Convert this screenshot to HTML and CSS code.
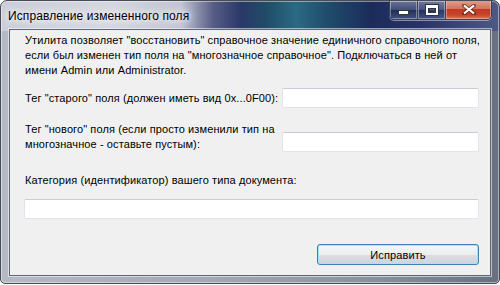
FILE: index.html
```html
<!DOCTYPE html>
<html lang="ru">
<head>
    <meta charset="utf-8">
    <title>Исправление измененного поля</title>
    <link rel="stylesheet" href="styles.css">
</head>
<body>
    <div class="window">
        <div class="titlebar">
            <span class="title">Исправление измененного поля</span>
            <div class="captions">
                <span class="cap cap-min"><span class="min-glyph"></span></span>
                <span class="cap cap-max"><span class="max-glyph"></span></span>
                <span class="cap cap-close">
                    <svg width="14" height="11" viewBox="0 0 14 11">
                        <path d="M2 1.5 L12 9.5 M12 1.5 L2 9.5" stroke="#3a1410" stroke-width="4" stroke-linecap="square" opacity="0.55"/>
                        <path d="M2 1.5 L12 9.5 M12 1.5 L2 9.5" stroke="#ffffff" stroke-width="2.2"/>
                    </svg>
                </span>
            </div>
        </div>
        <div class="client">
            <p class="intro">Утилита позволяет "восстановить" справочное значение единичного справочного поля,<br>если был изменен тип поля на "многозначное справочное". Подключаться в ней от<br>имени Admin или Administrator.</p>

            <div class="row row-center">
                <label class="label">Тег "старого" поля (должен иметь вид 0x...0F00):</label>
                <input class="field field-short" type="text">
            </div>

            <div class="row row-bottom">
                <label class="label">Тег "нового" поля (если просто изменили тип на<br>многозначное - оставьте пустым):</label>
                <input class="field field-short" type="text">
            </div>

            <label class="label label-block">Категория (идентификатор) вашего типа документа:</label>
            <input class="field field-wide" type="text">

            <div class="actions">
                <button class="button">Исправить</button>
            </div>
        </div>
    </div>
</body>
</html>
```

FILE: styles.css
```css
html, body {
    margin: 0;
    padding: 0;
}

body {
    background-color: #ffffff;
    font-family: "Liberation Sans", Arial, sans-serif;
    font-size: 11px;
    letter-spacing: 0.1px;
    color: #000000;
}

.window {
    box-sizing: border-box;
    width: 500px;
    height: 284px;
    padding: 0 8px 7px 8px;
    display: flex;
    flex-direction: column;
    border: 1px solid #464b55;
    border-radius: 7px 7px 5px 5px;
    background:
        linear-gradient(90deg, #cbcdd9 0, #d4d6e0 110px, #c2c4d2 180px, #585d86 212px, #2a3868 240px, #1f4c66 265px, #2b6a84 295px, #20496a 330px, #1b2c5a 370px, #28326a 420px, #505a86 500px) top / 100% 30px no-repeat,
        linear-gradient(90deg, #b5b9c3 0, #a3a9b5 40%, #8a919e 75%, #687080 100%);
    box-shadow: inset 0 0 0 1px rgba(255, 255, 255, 0.45);
    overflow: hidden;
}

.titlebar {
    height: 28px;
    display: flex;
    align-items: flex-start;
    justify-content: space-between;
    margin-left: -1px;
}

.title {
    margin-top: 8px;
    font-size: 12px;
    color: #000000;
    text-shadow: 0 0 6px #ffffff, 0 0 10px #ffffff, 0 0 14px rgba(255, 255, 255, 0.9);
    white-space: nowrap;
}

.captions {
    display: flex;
    height: 19px;
    margin-top: -1px;
    margin-right: -1px;
    border: 1px solid #3c4250;
    border-top: none;
    border-radius: 0 0 5px 5px;
    overflow: hidden;
    box-shadow: 0 1px 0 rgba(255, 255, 255, 0.45);
}

.cap {
    display: flex;
    align-items: center;
    justify-content: center;
    height: 19px;
}

.cap-min,
.cap-max {
    width: 27px;
    background: linear-gradient(to bottom, rgba(255, 255, 255, 0.35) 0, rgba(255, 255, 255, 0.15) 50%, rgba(20, 30, 50, 0.25) 51%, rgba(120, 140, 170, 0.35) 100%);
    border-right: 1px solid #3c4250;
    box-shadow: inset 0 0 0 1px rgba(255, 255, 255, 0.35);
}

.min-glyph {
    width: 9px;
    height: 3px;
    margin-top: 5px;
    background: #ffffff;
    border: 1px solid #30343c;
}

.max-glyph {
    width: 8px;
    height: 5px;
    border: 2px solid #ffffff;
    border-top-width: 3px;
    box-shadow: 0 0 0 1px #30343c, inset 0 0 0 1px #30343c;
}

.cap-close {
    width: 45px;
    background: linear-gradient(to bottom, #e2a293 0, #d4735f 45%, #c23a22 50%, #c8452c 80%, #e07a52 100%);
    box-shadow: inset 0 0 0 1px rgba(255, 210, 200, 0.45);
}

.client {
    flex: 1;
    box-sizing: border-box;
    display: flex;
    flex-direction: column;
    padding: 3px 11px 0 14px;
    background-color: #f0f0f0;
    border: 1px solid #5e6673;
    box-shadow: 0 0 0 1px rgba(255, 255, 255, 0.55);
}

.intro {
    margin: 0;
    padding-left: 1px;
    line-height: 15px;
    white-space: nowrap;
}

.label {
    padding-left: 1px;
    line-height: 15px;
    white-space: nowrap;
}

.row {
    display: flex;
    justify-content: space-between;
}

.row-center {
    margin-top: 10px;
    align-items: center;
}

.row-bottom {
    margin-top: 14px;
    align-items: flex-end;
}

.label-block {
    display: block;
    margin-top: 21px;
}

.field {
    box-sizing: border-box;
    height: 20px;
    margin: 0;
    padding: 0 3px;
    background-color: #ffffff;
    border: 1px solid #e2e3ea;
    border-top-color: #c9ccd4;
    border-radius: 2px;
    font-family: inherit;
    font-size: 11px;
}

.field-short {
    width: 197px;
}

.field-wide {
    width: 100%;
    margin-top: 11px;
}

.actions {
    display: flex;
    justify-content: flex-end;
    margin-top: 25px;
}

.button {
    box-sizing: border-box;
    width: 162px;
    height: 21px;
    padding: 0;
    border: 1px solid #3c7fb1;
    border-radius: 3px;
    background: linear-gradient(to bottom, #f4f6f8 0, #eceef0 50%, #dcdee2 51%, #d0d3d8 100%);
    box-shadow: inset 0 0 0 1px #a6e4f8;
    font-family: inherit;
    font-size: 11px;
    letter-spacing: 0.1px;
    color: #000000;
}
```
